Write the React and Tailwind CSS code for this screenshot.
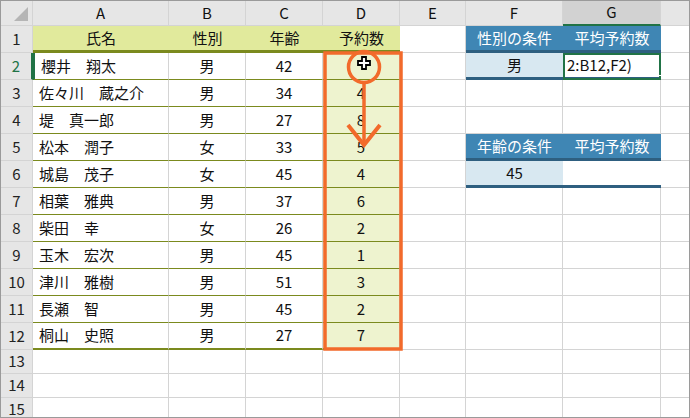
import React from "react";

const cols = ["A", "B", "C", "D", "E", "F", "G", ""];
const people = [
  ["櫻井　翔太", "男", "42", ""],
  ["佐々川　蔵之介", "男", "34", "4"],
  ["堤　真一郎", "男", "27", "8"],
  ["松本　潤子", "女", "33", "5"],
  ["城島　茂子", "女", "45", "4"],
  ["相葉　雅典", "男", "37", "6"],
  ["柴田　幸", "女", "26", "2"],
  ["玉木　宏次", "男", "45", "1"],
  ["津川　雅樹", "男", "51", "3"],
  ["長瀬　智", "男", "45", "2"],
  ["桐山　史照", "男", "27", "7"],
];

const g = "border-r border-b border-[#d4d4d4]";

function Cell({ className = "", children }) {
  return <div className={`flex items-center overflow-hidden whitespace-nowrap ${g} ${className}`}>{children}</div>;
}

function sideCells(r) {
  const blueHead = "bg-[#3f86b4] text-white justify-center border-b-[3px] border-b-[#2e5f80] border-r-0";
  if (r === 1) return [<Cell key="f" className={blueHead}>性別の条件</Cell>, <Cell key="g" className={blueHead}>平均予約数</Cell>];
  if (r === 2)
    return [
      <Cell key="f" className="bg-[#d8e8f1] justify-center border-b-[3px] border-b-[#2e5f80] border-r-0">男</Cell>,
      <Cell key="g" className="relative border-b-[3px] border-b-[#2e5f80] border-r-0 outline outline-2 outline-[#217346] -outline-offset-2 pl-1">
        2:B12,F2)
        <span className="absolute right-[-3px] bottom-[-4px] w-[6px] h-[6px] bg-[#217346] border border-white" />
      </Cell>,
    ];
  if (r === 5) return [<Cell key="f" className={blueHead}>年齢の条件</Cell>, <Cell key="g" className={blueHead}>平均予約数</Cell>];
  if (r === 6)
    return [
      <Cell key="f" className="bg-[#d8e8f1] justify-center border-b-[3px] border-b-[#2e5f80] border-r-0">45</Cell>,
      <Cell key="g" className="border-b-[3px] border-b-[#2e5f80] border-r-0" />,
    ];
  return [<Cell key="f" />, <Cell key="g" />];
}

export default function App() {
  const rows = [];
  for (let r = 1; r <= 15; r++) {
    const p = people[r - 2];
    const ol = "border-b-[#7b8a1e]";
    const bw = r === 12 ? "border-b-2" : "border-b";
    rows.push(
      <Cell key={`h${r}`} className={`justify-center bg-[#e6e6e6] ${r === 2 ? "bg-[#d2d2d2] text-[#217346] border-r-2 border-r-[#217346]" : "text-[#222]"}`}>{r}</Cell>
    );
    if (r === 1) {
      rows.push(<Cell key="a" className={`bg-[#e1ea9c] justify-center border-b-[3px] ${ol} border-r-0`}>氏名</Cell>);
      rows.push(<Cell key="b" className={`bg-[#e1ea9c] justify-center border-b-[3px] ${ol} border-r-0`}>性別</Cell>);
      rows.push(<Cell key="c" className={`bg-[#e1ea9c] justify-center border-b-[3px] ${ol} border-r-0`}>年齢</Cell>);
      rows.push(<Cell key="d" className={`bg-[#e1ea9c] justify-center border-b-[3px] ${ol} border-r-0`}>予約数</Cell>);
    } else if (p) {
      rows.push(<Cell key="a" className={`pl-1.5 ${bw} ${ol} ${r === 2 ? "border-l-2 border-l-[#217346]" : ""}`}>{p[0]}</Cell>);
      rows.push(<Cell key="b" className={`justify-center ${bw} ${ol}`}>{p[1]}</Cell>);
      rows.push(<Cell key="c" className={`justify-center ${bw} ${ol}`}>{p[2]}</Cell>);
      rows.push(<Cell key="d" className={`justify-center bg-[#eef3cf] ${bw} ${ol}`}>{p[3]}</Cell>);
    } else {
      ["a", "b", "c", "d"].forEach((k) => rows.push(<Cell key={k} />));
    }
    rows.push(<Cell key="e" />);
    rows.push(...sideCells(r));
    rows.push(<Cell key="x" className="border-r-0" />);
  }

  return (
    <div className="relative w-[690px] h-[418px] overflow-hidden bg-white border border-[#9a9a9a] text-[15px] text-[#111]" style={{ fontFamily: '"Noto Sans CJK JP", sans-serif' }}>
      <div className="grid grid-cols-[32px_136px_77px_77px_77px_66px_97px_98px_1fr] grid-rows-[25px_repeat(12,27px)_repeat(3,24px)]">
        <div className={`bg-[#e6e6e6] ${g} relative`}>
          <svg className="absolute right-1 bottom-1" width="14" height="14"><polygon points="14,0 14,14 0,14" fill="#b5b5b5" /></svg>
        </div>
        {cols.map((c, i) => (
          <Cell key={c + i} className={`justify-center ${c === "G" ? "bg-[#d2d2d2] border-b-2 border-b-[#217346]" : "bg-[#e6e6e6]"} ${c === "" ? "border-r-0" : ""}`}>{c}</Cell>
        ))}
        {rows}
      </div>
      <svg className="absolute left-0 top-0 pointer-events-none" width="690" height="418">
        <rect x="324" y="52" width="76" height="296" fill="none" stroke="#f26a2b" strokeWidth="3.5" />
        <circle cx="363" cy="66" r="15.5" fill="none" stroke="#f26a2b" strokeWidth="3.5" />
        <path d="M357 60h4v-4h4v4h4v4h-4v4h-4v-4h-4z" fill="white" stroke="black" strokeWidth="1.8" />
        <line x1="363" y1="82" x2="363" y2="143" stroke="#f26a2b" strokeWidth="3.5" />
        <polyline points="347,124 363,144 379,124" fill="none" stroke="#f26a2b" strokeWidth="4" />
      </svg>
    </div>
  );
}
